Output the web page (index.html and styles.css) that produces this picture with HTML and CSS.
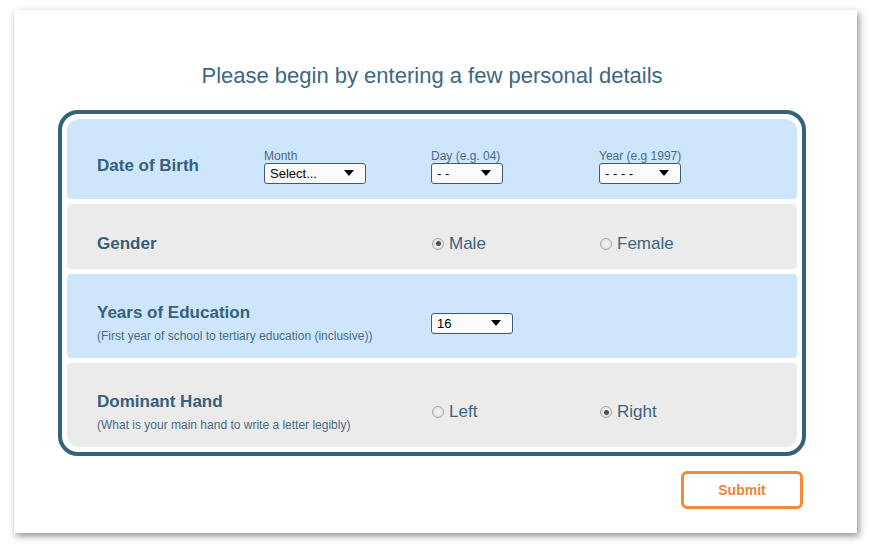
FILE: index.html
```html
<!DOCTYPE html>
<html>
<head>
<meta charset="utf-8">
<title>Personal details</title>
<link rel="stylesheet" href="styles.css">
</head>
<body>
<div class="page">
  <h1 class="title">Please begin by entering a few personal details</h1>
  <div class="form">
    <div class="row row-blue row-first h80">
      <div class="label">Date of Birth</div>
      <div class="field">
        <div class="field-label">Month</div>
        <span class="select w102"><span>Select...</span><svg class="arrow" width="10" height="6" viewBox="0 0 10 6"><path d="M0 0H10L5 6Z" fill="#000"/></svg></span>
      </div>
      <div class="field">
        <div class="field-label">Day (e.g. 04)</div>
        <span class="select w72"><span>- -</span><svg class="arrow" width="10" height="6" viewBox="0 0 10 6"><path d="M0 0H10L5 6Z" fill="#000"/></svg></span>
      </div>
      <div class="field">
        <div class="field-label">Year (e.g 1997)</div>
        <span class="select w82"><span>- - - -</span><svg class="arrow" width="10" height="6" viewBox="0 0 10 6"><path d="M0 0H10L5 6Z" fill="#000"/></svg></span>
      </div>
    </div>
    <div class="row row-gray h65">
      <div class="label">Gender</div>
      <div></div>
      <label class="radio"><span class="dot checked"></span>Male</label>
      <label class="radio"><span class="dot"></span>Female</label>
    </div>
    <div class="row row-blue h84">
      <div class="label span2">Years of Education<div class="sub">(First year of school to tertiary education (inclusive))</div></div>
      <div class="field">
        <span class="select w82"><span>16</span><svg class="arrow" width="10" height="6" viewBox="0 0 10 6"><path d="M0 0H10L5 6Z" fill="#000"/></svg></span>
      </div>
    </div>
    <div class="row row-gray row-last h84">
      <div class="label span2">Dominant Hand<div class="sub">(What is your main hand to write a letter legibly)</div></div>
      <label class="radio"><span class="dot"></span>Left</label>
      <label class="radio"><span class="dot checked"></span>Right</label>
    </div>
  </div>
  <div class="actions">
    <button class="submit">Submit</button>
  </div>
</div>
</body>
</html>
```
FILE: styles.css
```css
html, body {
  margin: 0;
  padding: 0;
  background: #ffffff;
  font-family: "Liberation Sans", Arial, sans-serif;
}
body {
  padding-bottom: 18px;
}
.page {
  margin: 10px 0 0 14px;
  width: 843px;
  height: 523px;
  box-sizing: border-box;
  background: #ffffff;
  box-shadow: 2px 3px 7px rgba(0, 0, 0, 0.45);
  padding: 53px 0 0 44px;
}
.title {
  margin: 0;
  width: 748px;
  text-align: center;
  font-weight: normal;
  font-size: 22px;
  line-height: 26px;
  color: #3d6783;
}
.form {
  margin-top: 21px;
  width: 748px;
  box-sizing: border-box;
  border: 4px solid #33627d;
  border-radius: 20px;
  padding: 5px;
  display: flex;
  flex-direction: column;
  gap: 5px;
}
.row {
  display: grid;
  grid-template-columns: 167px 167px 168px 1fr;
  align-items: center;
  box-sizing: border-box;
  padding: 14px 0 0 30px;
  border-radius: 4px;
}
.row-blue { background: #cde6fc; }
.row-gray { background: #ebebeb; }
.row-first { border-radius: 12px 12px 4px 4px; }
.row-last { border-radius: 4px 4px 12px 12px; }
.h80 { height: 80px; }
.h65 { height: 65px; }
.h84 { height: 84px; }
.label {
  font-weight: bold;
  font-size: 17px;
  line-height: 20px;
  color: #36607b;
}
.span2 { grid-column: span 2; }
.sub {
  font-weight: normal;
  font-size: 12px;
  line-height: 14px;
  margin-top: 6px;
  color: #4a6b82;
}
.field {
  display: flex;
  flex-direction: column;
  align-items: flex-start;
}
.field-label {
  font-size: 12px;
  line-height: 14px;
  color: #4a6b82;
}
.select {
  display: inline-flex;
  align-items: center;
  justify-content: space-between;
  box-sizing: border-box;
  height: 21px;
  border: 1px solid #44596a;
  border-radius: 3px;
  background: #fbfbfb;
  padding: 0 11px 0 5px;
  font-size: 13px;
  color: #000;
}
.arrow { display: block; }
.w102 { width: 102px; }
.w72 { width: 72px; }
.w82 { width: 82px; }
.radio {
  display: flex;
  align-items: center;
  font-size: 17px;
  line-height: 20px;
  color: #3b6582;
  margin-left: 1px;
}
.dot {
  width: 12px;
  height: 12px;
  box-sizing: border-box;
  border: 1px solid #a8a8a8;
  border-radius: 50%;
  background: radial-gradient(circle, #f4f4f4, #dcdcdc);
  margin-right: 5px;
  position: relative;
}
.dot.checked::after {
  content: "";
  position: absolute;
  left: 2.5px;
  top: 2.5px;
  width: 5px;
  height: 5px;
  border-radius: 50%;
  background: #505050;
}
.actions {
  width: 748px;
  display: flex;
  justify-content: flex-end;
  margin-top: 15px;
}
.submit {
  margin-right: 3px;
  width: 122px;
  height: 38px;
  box-sizing: border-box;
  border: 3px solid #f5893a;
  border-radius: 6px;
  background: #ffffff;
  color: #f0833a;
  font-family: "Liberation Sans", Arial, sans-serif;
  font-weight: bold;
  font-size: 14px;
}
```
